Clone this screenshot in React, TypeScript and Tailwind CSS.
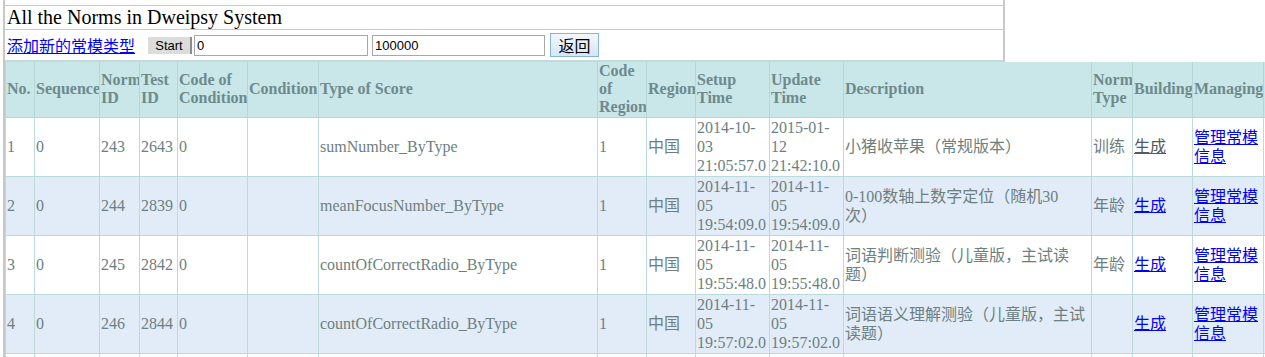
import React from "react";

type Row = {
  no: string;
  seq: string;
  normId: string;
  testId: string;
  codeCond: string;
  cond: string;
  score: string;
  codeRegion: string;
  region: string;
  setup: string[];
  update: string[];
  desc: string[];
  normType: string;
  visited?: boolean;
};

const rows: Row[] = [
  {
    no: "1", seq: "0", normId: "243", testId: "2643", codeCond: "0", cond: "",
    score: "sumNumber_ByType", codeRegion: "1", region: "中国",
    setup: ["2014-10-", "03", "21:05:57.0"], update: ["2015-01-", "12", "21:42:10.0"],
    desc: ["小猪收苹果（常规版本）"], normType: "训练", visited: true,
  },
  {
    no: "2", seq: "0", normId: "244", testId: "2839", codeCond: "0", cond: "",
    score: "meanFocusNumber_ByType", codeRegion: "1", region: "中国",
    setup: ["2014-11-", "05", "19:54:09.0"], update: ["2014-11-", "05", "19:54:09.0"],
    desc: ["0-100数轴上数字定位（随机30", "次）"], normType: "年龄",
  },
  {
    no: "3", seq: "0", normId: "245", testId: "2842", codeCond: "0", cond: "",
    score: "countOfCorrectRadio_ByType", codeRegion: "1", region: "中国",
    setup: ["2014-11-", "05", "19:55:48.0"], update: ["2014-11-", "05", "19:55:48.0"],
    desc: ["词语判断测验（儿童版，主试读", "题）"], normType: "年龄",
  },
  {
    no: "4", seq: "0", normId: "246", testId: "2844", codeCond: "0", cond: "",
    score: "countOfCorrectRadio_ByType", codeRegion: "1", region: "中国",
    setup: ["2014-11-", "05", "19:57:02.0"], update: ["2014-11-", "05", "19:57:02.0"],
    desc: ["词语语义理解测验（儿童版，主试", "读题）"], normType: "",
  },
  {
    no: "5", seq: "0", normId: "247", testId: "2845", codeCond: "0", cond: "",
    score: "countOfCorrectRadio_ByType", codeRegion: "1", region: "中国",
    setup: ["2014-11-", "05", "19:58:11.0"], update: ["2014-11-", "05", "19:58:11.0"],
    desc: ["词语判断测验（成人版）"], normType: "年龄",
  },
];

const widths = [29, 65, 40, 38, 70, 71, 279, 49, 49, 74, 74, 248, 41, 60, 71, 80];

const headers: string[][] = [
  ["No."],
  ["Sequence"],
  ["Norm", "ID"],
  ["Test", "ID"],
  ["Code of", "Condition"],
  ["Condition"],
  ["Type of Score"],
  ["Code", "of", "Region"],
  ["Region"],
  ["Setup", "Time"],
  ["Update", "Time"],
  ["Description"],
  ["Norm", "Type"],
  ["Building"],
  ["Managing"],
  ["Action"],
];

function Lines({ lines }: { lines: string[] }) {
  return (
    <>
      {lines.map((l, i) => (
        <React.Fragment key={i}>
          {i > 0 && <br />}
          {l}
        </React.Fragment>
      ))}
    </>
  );
}

const td =
  "border border-[#bcdada] pl-[1px] pr-0 py-0 align-middle text-left whitespace-nowrap overflow-hidden";

export default function App() {
  return (
    <div className="w-[1265px] h-[357px] overflow-hidden bg-white pl-[3px] font-['Liberation_Serif','Noto_Sans_CJK_SC',serif]">
      <div className="border-l-2 border-[#c8c8c8] min-h-[357px]">
        {/* top box */}
        <div className="w-[1000px] border-r-2 border-[#c8c8c8] border-b-2 border-b-[#c2dada]">
          <div className="h-[6px] border-b border-[#c8c8c8]" />
          <div className="h-[24px] border-b border-[#c8c8c8] pl-[2px] flex items-center text-[20px] leading-[23px] text-black">
            All the Norms in Dweipsy System
          </div>
          <div className="h-[30px] flex items-center pl-[2px]">
            <a
              href="#"
              className="text-[16px] leading-[18px] text-[#0000ff] underline font-['Noto_Sans_CJK_SC',sans-serif]"
            >
              添加新的常模类型
            </a>
            <button className="ml-[13px] h-[17px] w-[44px] bg-[#dcdcdc] border-r-2 border-[#8c8c8c] text-[13px] leading-[17px] text-black font-['Liberation_Sans',sans-serif] flex items-center justify-center">
              Start
            </button>
            <input
              readOnly
              value="0"
              className="ml-[2px] h-[21px] w-[174px] border border-[#a8a8a8] px-[2px] text-[13px] text-black font-['Liberation_Sans',sans-serif] outline-none"
            />
            <input
              readOnly
              value="100000"
              className="ml-[4px] h-[21px] w-[173px] border border-[#a8a8a8] px-[2px] text-[13px] text-black font-['Liberation_Sans',sans-serif] outline-none"
            />
            <button className="ml-[5px] h-[24px] w-[49px] border border-[#86b6dc] bg-gradient-to-b from-[#f2f7fc] to-[#d6e6f4] text-[16px] leading-[20px] text-black font-['Noto_Sans_CJK_SC',sans-serif] flex items-center justify-center">
              返回
            </button>
          </div>
        </div>

        {/* main table */}
        <table className="table-fixed border-collapse w-[1328px] text-[16px]">
          <colgroup>
            {widths.map((w, i) => (
              <col key={i} style={{ width: w }} />
            ))}
          </colgroup>
          <thead>
            <tr className="bg-[#c9e7e9] h-[55px]">
              {headers.map((h, i) => (
                <th
                  key={i}
                  className="border border-[#b6d6d6] border-t-0 pl-[1px] pr-0 py-0 align-middle text-left font-bold text-[#6f8a8d] leading-[18px] whitespace-nowrap overflow-hidden"
                >
                  <Lines lines={h} />
                </th>
              ))}
            </tr>
          </thead>
          <tbody className="text-[#6d7f80] leading-[19px]">
            {rows.map((r, i) => (
              <tr key={i} className={`h-[59px] ${i % 2 === 1 ? "bg-[#e2ecf8]" : "bg-white"}`}>
                <td className={td}>{r.no}</td>
                <td className={td}>{r.seq}</td>
                <td className={td}>{r.normId}</td>
                <td className={td}>{r.testId}</td>
                <td className={td}>{r.codeCond}</td>
                <td className={td}>{r.cond}</td>
                <td className={td}>{r.score}</td>
                <td className={td}>{r.codeRegion}</td>
                <td className={td}>{r.region}</td>
                <td className={td}>
                  <Lines lines={r.setup} />
                </td>
                <td className={td}>
                  <Lines lines={r.update} />
                </td>
                <td className={td}>
                  <Lines lines={r.desc} />
                </td>
                <td className={td}>{r.normType}</td>
                <td className={td}>
                  <a
                    href="#"
                    className={`underline ${r.visited ? "text-[#4e5a66]" : "text-[#0000ff]"}`}
                  >
                    生成
                  </a>
                </td>
                <td className={td}>
                  <a href="#" className="underline text-[#0000ff]">
                    管理常模
                    <br />
                    信息
                  </a>
                </td>
                <td className={td}>
                  <a href="#" className="underline text-[#0000ff]">
                    删除
                  </a>
                </td>
              </tr>
            ))}
          </tbody>
        </table>
      </div>
    </div>
  );
}
